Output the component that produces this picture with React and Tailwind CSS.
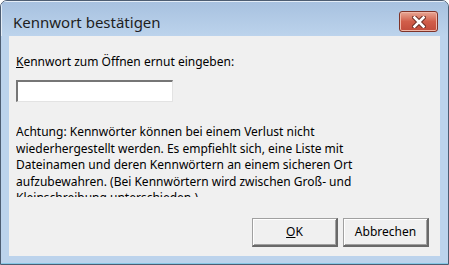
import React from 'react';

function CloseGlyph() {
  return (
    <svg width="14" height="12" viewBox="0 0 14 12">
      <path d="M2.5 1.5 L11.5 10.5 M11.5 1.5 L2.5 10.5" stroke="#6b2f26" strokeWidth="4.6" strokeLinecap="square" />
      <path d="M2.5 1.5 L11.5 10.5 M11.5 1.5 L2.5 10.5" stroke="#ffffff" strokeWidth="2.6" strokeLinecap="square" />
    </svg>
  );
}

function DlgButton({ children }) {
  return (
    <button className="w-[86px] h-[29px] bg-[#f0f0f0] text-[12px] text-black border-t border-l border-[#a0a0a0] border-r-2 border-b-2 border-r-[#696969] border-b-[#696969] shadow-[inset_1px_1px_0_#ffffff,inset_-1px_-1px_0_#a0a0a0]">
      {children}
    </button>
  );
}

export default function App() {
  return (
    <div className="w-[449px] h-[265px] bg-white" style={{ fontFamily: '"Noto Sans", "Liberation Sans", sans-serif' }}>
      <div className="w-[449px] h-[265px] flex flex-col rounded-t-[7px] border border-[#4d5d72] bg-[#bcd3ec] overflow-hidden">
        <div className="h-[35px] flex items-start justify-between bg-gradient-to-b from-[#a7c1df] to-[#bcd3ec] shadow-[inset_1px_1px_0_#e4edf7]">
          <div className="pl-[12px] pt-[12px] text-[15px] leading-[18px] text-[#1e1e1e]">Kennwort bestätigen</div>
          <div className="mt-[10px] mr-[10px] w-[39px] h-[21px] rounded-[3px] border border-[#7f3328] bg-gradient-to-b from-[#e7a795] via-[#d15e4a] to-[#c24c3c] shadow-[inset_0_0_0_1px_#f0b7a8] flex items-center justify-center">
            <CloseGlyph />
          </div>
        </div>
        <div className="mx-[8px] h-[220px] bg-[#f0f0f0] flex flex-col text-[12px] text-black">
          <div className="pl-[7px] pt-[18px] leading-[16px]">
            <span className="underline">K</span>ennwort zum Öffnen ernut eingeben:
          </div>
          <div className="ml-[7px] mt-[10px] w-[157px] h-[22px] bg-white border-t-2 border-l-2 border-t-[#767676] border-l-[#767676] border-r border-b border-r-[#e3e3e3] border-b-[#e3e3e3]" />
          <div className="ml-[7px] mt-[22px] h-[73px] overflow-hidden leading-[16.6px] whitespace-nowrap">
            Achtung: Kennwörter können bei einem Verlust nicht<br />
            wiederhergestellt werden. Es empfiehlt sich, eine Liste mit<br />
            Dateinamen und deren Kennwörtern an einem sicheren Ort<br />
            aufzubewahren. (Bei Kennwörtern wird zwischen Groß- und<br />
            Kleinschreibung unterschieden.)
          </div>
          <div className="mt-auto mb-[9px] mr-[11px] flex justify-end gap-[5px]">
            <DlgButton><span className="underline">O</span>K</DlgButton>
            <DlgButton>Abbrechen</DlgButton>
          </div>
        </div>
        <div className="flex-1 border-b border-b-[#86c8e6]" />
      </div>
    </div>
  );
}
